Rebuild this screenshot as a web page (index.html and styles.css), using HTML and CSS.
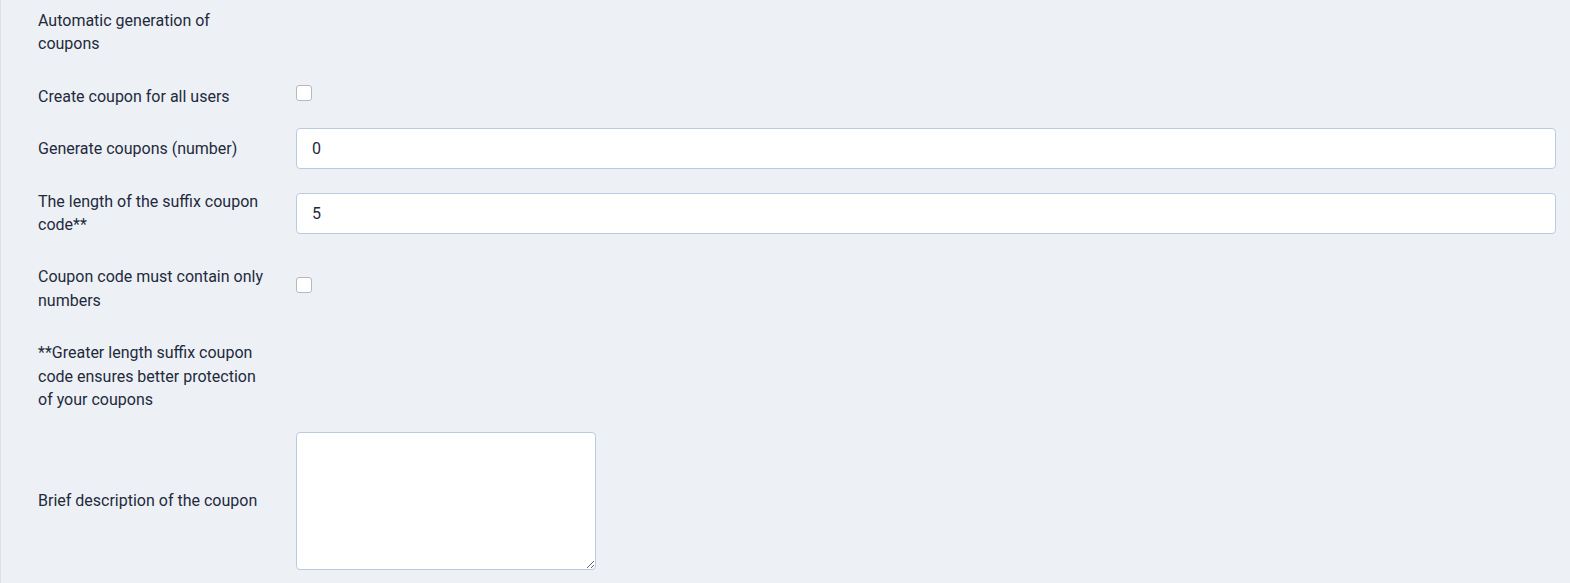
FILE: index.html
```html
<!DOCTYPE html>
<html>
<head>
<meta charset="utf-8">
<link rel="stylesheet" href="styles.css">
</head>
<body>
<div class="page">
  <div class="row">
    <div class="label label-head">Automatic generation of coupons</div>
  </div>
  <div class="row">
    <div class="label">Create coupon for all users</div>
    <div class="field"><div class="line"><input type="checkbox" class="check"></div></div>
  </div>
  <div class="row">
    <div class="label">Generate coupons (number)</div>
    <div class="field grow"><input type="text" class="text" value="0"></div>
  </div>
  <div class="row">
    <div class="label">The length of the suffix coupon code**</div>
    <div class="field grow"><input type="text" class="text" value="5"></div>
  </div>
  <div class="row">
    <div class="label">Coupon code must contain only numbers</div>
    <div class="field"><div class="line"><input type="checkbox" class="check"></div></div>
  </div>
  <div class="row">
    <div class="label">**Greater length suffix coupon code ensures better protection of your coupons</div>
  </div>
  <div class="row">
    <div class="label">Brief description of the coupon</div>
    <div class="field field-area"><textarea class="area"></textarea></div>
  </div>
</div>
</body>
</html>
```

FILE: styles.css
```css
html, body {
  margin: 0;
  padding: 0;
  background: #edf1f6;
}
body {
  font-family: Roboto, "Noto Sans", sans-serif;
  font-size: 16px;
  line-height: 23.4px;
  color: #1f2a3c;
}
.page {
  min-height: 583px;
  box-sizing: border-box;
  border-left: 1px solid #dde2e8;
  padding-right: 14px;
}
.row {
  display: flex;
  align-items: center;
}
.label {
  box-sizing: content-box;
  width: 230px;
  padding: 14.5px 28px 14.5px 37px;
  flex: none;
}
.label-head {
  padding-top: 9px;
}
.field {
  padding: 4px 0;
}
.field-area {
  padding: 6px 0;
}
.grow {
  flex: 1;
}
.line {
  height: 23.4px;
}
.check {
  -webkit-appearance: none;
  appearance: none;
  display: block;
  margin: 0;
  width: 16px;
  height: 16px;
  box-sizing: border-box;
  border: 1px solid #b5b8bd;
  border-radius: 3px;
  background: #fff;
}
.text {
  display: block;
  width: 100%;
  box-sizing: border-box;
  height: 41px;
  border: 1px solid #b9cbe2;
  border-radius: 4px;
  background: #fff;
  padding: 0 15px;
  font-family: Roboto, "Noto Sans", sans-serif;
  font-size: 16px;
  color: #1f2a3c;
  outline: none;
}
.area {
  display: block;
  width: 300px;
  height: 138px;
  box-sizing: border-box;
  border: 1px solid #b9cbe2;
  border-radius: 4px;
  background: #fff;
  margin: 0;
  padding: 8px 16px;
  font-family: Roboto, "Noto Sans", sans-serif;
  font-size: 16px;
}
```
